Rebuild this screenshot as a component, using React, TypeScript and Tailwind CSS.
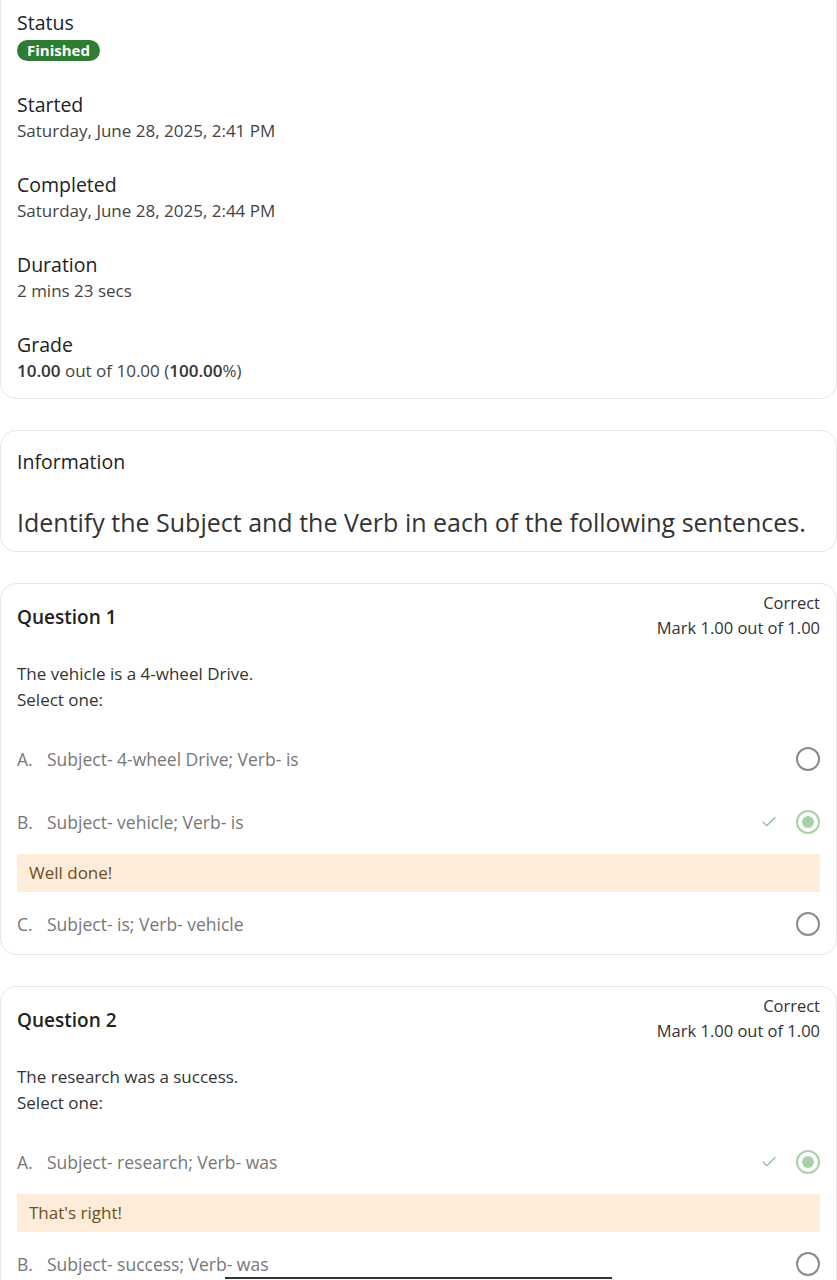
import { Check } from "lucide-react";

const summary = [
  { label: "Started", value: "Saturday, June 28, 2025, 2:41 PM" },
  { label: "Completed", value: "Saturday, June 28, 2025, 2:44 PM" },
  { label: "Duration", value: "2 mins 23 secs" },
];

type Option = { letter: string; text: string; checked?: boolean; feedback?: string };

const questions: { title: string; prompt: string; options: Option[] }[] = [
  {
    title: "Question 1",
    prompt: "The vehicle is a 4-wheel Drive.",
    options: [
      { letter: "A.", text: "Subject- 4-wheel Drive; Verb- is" },
      { letter: "B.", text: "Subject- vehicle; Verb- is", checked: true, feedback: "Well done!" },
      { letter: "C.", text: "Subject- is; Verb- vehicle" },
    ],
  },
  {
    title: "Question 2",
    prompt: "The research was a success.",
    options: [
      { letter: "A.", text: "Subject- research; Verb- was", checked: true, feedback: "That's right!" },
      { letter: "B.", text: "Subject- success; Verb- was" },
    ],
  },
];

function Radio({ checked }: { checked?: boolean }) {
  if (checked) {
    return (
      <span className="w-6 h-6 rounded-full border-2 border-[#a9d1a9] flex items-center justify-center">
        <span className="w-[12px] h-[12px] rounded-full bg-[#a9d1a9]" />
      </span>
    );
  }
  return <span className="w-6 h-6 rounded-full border-2 border-[#8a8a8a]" />;
}

function QuestionCard({ q }: { q: (typeof questions)[number] }) {
  return (
    <div className="border border-[#e6e6e6] rounded-2xl px-4 pt-[6px] pb-[10px]">
      <div className="flex items-center justify-between">
        <div className="text-[19px] font-semibold text-[#222] leading-[26px] pt-[4px]">{q.title}</div>
        <div className="text-right text-[16.5px] text-[#333] leading-[25px]">
          <div>Correct</div>
          <div>Mark 1.00 out of 1.00</div>
        </div>
      </div>
      <div className="mt-[21px] text-[17px] text-[#333] leading-[26px]">
        <div>{q.prompt}</div>
        <div>Select one:</div>
      </div>
      <div className="mt-[26px] flex flex-col">
        {q.options.map((o, i) => (
          <div key={o.letter} className={i === 0 ? "" : o.checked || !q.options[i - 1].feedback ? "mt-[23px]" : "mt-[12px]"}>
            <div className="h-10 flex items-center text-[17.5px] text-[#777]">
              <span className="w-[30px]">{o.letter}</span>
              <span className="flex-1">{o.text}</span>
              {o.checked && <Check className="w-[18px] h-[18px] text-[#8cbf8c] mr-[18px]" strokeWidth={1.6} />}
              <Radio checked={o.checked} />
            </div>
            {o.feedback && (
              <div className="mt-[12px] h-[38px] bg-[#fcecd9] flex items-center px-3 text-[17px] text-[#6e4f1c]">
                {o.feedback}
              </div>
            )}
          </div>
        ))}
      </div>
    </div>
  );
}

export default function App() {
  return (
    <div className="relative w-[837px] h-[1280px] overflow-hidden bg-white font-['Open_Sans','Noto_Sans',sans-serif]">
      <div className="-mt-[20px] border border-[#e6e6e6] rounded-2xl px-4 pt-[28px] pb-[14px]">
        <div className="text-[19.5px] text-[#222] leading-[27px]">Status</div>
        <div className="h-[28px] flex items-center">
          <span className="inline-flex items-center h-[21px] px-[10px] rounded-full bg-[#2e7d32] text-white text-[15px] font-bold">
            Finished
          </span>
        </div>
        {summary.map((s) => (
          <div key={s.label} className="mt-[27px]">
            <div className="text-[19.5px] text-[#222] leading-[27px]">{s.label}</div>
            <div className="text-[17px] text-[#444] leading-[26px]">{s.value}</div>
          </div>
        ))}
        <div className="mt-[27px]">
          <div className="text-[19.5px] text-[#222] leading-[27px]">Grade</div>
          <div className="text-[17px] text-[#444] leading-[26px]">
            <b className="text-[#333] font-semibold">10.00</b> out of 10.00 (<b className="text-[#333] font-semibold">100.00</b>%)
          </div>
        </div>
      </div>

      <div className="mt-[31px] border border-[#e6e6e6] rounded-2xl px-4 pt-[18px] pb-[12px]">
        <div className="text-[19.5px] font-medium text-[#222] leading-[26px]">Information</div>
        <div className="mt-[30px] text-[25px] font-medium text-[#333] leading-[34px]">
          Identify the Subject and the Verb in each of the following sentences.
        </div>
      </div>

      <div className="mt-[31px] flex flex-col gap-[31px]">
        {questions.map((q) => (
          <QuestionCard key={q.title} q={q} />
        ))}
      </div>

      <div className="absolute left-[225px] bottom-[1px] w-[387px] h-[2px] bg-[#333]" />
    </div>
  );
}
